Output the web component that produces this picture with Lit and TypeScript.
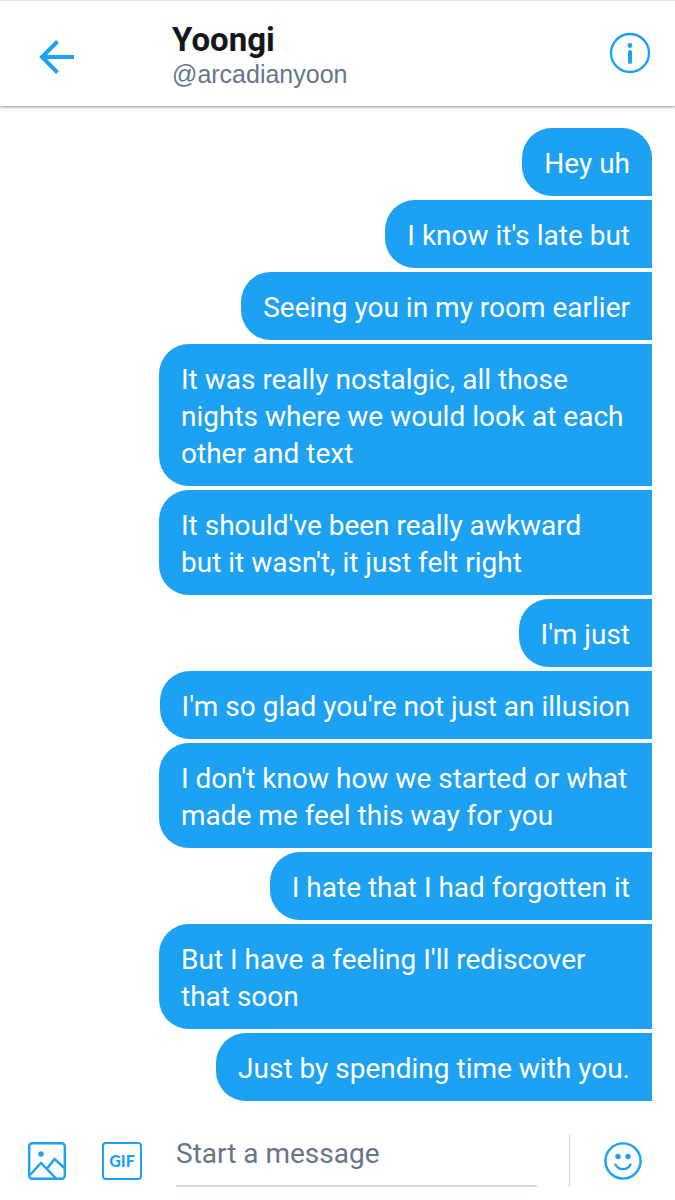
import { LitElement, html, css } from "lit";
import { customElement, property } from "lit/decorators.js";
import { classMap } from "lit/directives/class-map.js";

@customElement("chat-header")
class ChatHeader extends LitElement {
  @property() name = "";
  @property() handle = "";

  static styles = css`
    :host {
      display: block;
    }
    .bar {
      display: flex;
      align-items: center;
      box-sizing: border-box;
      height: 106px;
      padding: 0 24px 0 36px;
      background: #fff;
      border-top: 1px solid #e1e4e6;
      box-shadow: 0 1px 3px rgba(0, 0, 0, 0.45);
    }
    .icon {
      display: block;
      flex: none;
      padding: 0 0 2px;
      border: 0;
      background: none;
      color: #1da1f2;
      cursor: pointer;
    }
    .icon svg {
      display: block;
    }
    .back {
      padding: 6px 0 0;
    }
    .who {
      flex: 1;
      min-width: 0;
      margin-left: 96px;
      padding-top: 4px;
    }
    .name {
      margin: 0;
      font: 700 33px/36px Roboto, sans-serif;
      color: #14171a;
    }
    .handle {
      margin: 0;
      font: 400 25px/32px "Liberation Sans", Arial, sans-serif;
      color: #657786;
    }
  `;

  render() {
    return html`
      <header class="bar">
        <button class="icon back" aria-label="Back">
          <svg width="40" height="40" viewBox="0 0 40 40" fill="none" stroke="currentColor" stroke-width="4">
            <path d="M21.5 4.5 L6 20 L21.5 35.5 M6 20 H38" />
          </svg>
        </button>
        <div class="who">
          <h1 class="name">${this.name}</h1>
          <p class="handle">${this.handle}</p>
        </div>
        <button class="icon" aria-label="Conversation info">
          <svg width="42" height="42" viewBox="0 0 42 42" fill="none" stroke="currentColor">
            <circle cx="21" cy="21" r="19" stroke-width="2.4" />
            <circle cx="21" cy="13.5" r="2.4" fill="currentColor" stroke="none" />
            <path d="M21 20 V30" stroke-width="4" stroke-linecap="round" />
          </svg>
        </button>
      </header>
    `;
  }
}

@customElement("chat-composer")
class ChatComposer extends LitElement {
  static styles = css`
    :host {
      display: block;
    }
    .bar {
      display: flex;
      align-items: center;
      padding: 0 32px 13px 27px;
      background: #fff;
    }
    .icon {
      display: block;
      flex: none;
      padding: 0;
      border: 0;
      background: none;
      color: #1da1f2;
      cursor: pointer;
    }
    .icon svg {
      display: block;
    }
    .gif {
      box-sizing: border-box;
      width: 40px;
      height: 38px;
      margin-left: 35px;
      border: 2px solid #1da1f2;
      border-radius: 4px;
      font: 900 16px/34px Lato, sans-serif;
      text-align: center;
    }
    .field {
      flex: 1;
      min-width: 0;
      box-sizing: border-box;
      height: 53px;
      margin: 0 32px 0 34px;
      padding: 0 0 12px;
      border: 0;
      border-bottom: 2px solid #ccd6dd;
      border-radius: 0;
      outline: none;
      background: none;
      font: 400 28px/36px Roboto, sans-serif;
      color: #14171a;
    }
    .field::placeholder {
      color: #657786;
      opacity: 1;
    }
    .emoji {
      padding-left: 33px;
      height: 53px;
      border-left: 1px solid #ccd6dd;
    }
  `;

  render() {
    return html`
      <form class="bar" @submit=${(e: Event) => e.preventDefault()}>
        <button class="icon" type="button" aria-label="Add photo">
          <svg width="40" height="38" viewBox="0 0 40 38" fill="none" stroke="currentColor" stroke-width="2.4">
            <rect x="2.2" y="1.2" width="35.6" height="35.6" rx="3" />
            <circle cx="14" cy="12" r="2.8" fill="currentColor" stroke="none" />
            <path d="M3 33 L14 21 L29 36.5 M20.5 26 L27.5 17 L37.5 26" />
          </svg>
        </button>
        <button class="icon gif" type="button" aria-label="Add GIF">GIF</button>
        <input class="field" type="text" placeholder="Start a message" aria-label="Start a message" />
        <button class="icon emoji" type="button" aria-label="Add emoji">
          <svg width="40" height="40" viewBox="0 0 40 40" fill="none" stroke="currentColor" stroke-width="2.4">
            <circle cx="20" cy="20" r="17.6" />
            <circle cx="15" cy="15.5" r="2.7" fill="currentColor" stroke="none" />
            <circle cx="25" cy="15.5" r="2.7" fill="currentColor" stroke="none" />
            <path d="M12.5 23.5 C15.5 29.6 24.5 29.6 27.5 23.5" stroke-linecap="round" />
          </svg>
        </button>
      </form>
    `;
  }
}

@customElement("app-root")
class AppRoot extends LitElement {
  private messages = [
    "Hey uh",
    "I know it's late but",
    "Seeing you in my room earlier",
    "It was really nostalgic, all those nights where we would look at each other and text",
    "It should've been really awkward\nbut it wasn't, it just felt right",
    "I'm just",
    "I'm so glad you're not just an illusion",
    "I don't know how we started or what made me feel this way for you",
    "I hate that I had forgotten it",
    "But I have a feeling I'll rediscover that soon",
    "Just by spending time with you.",
  ];

  static styles = css`
    :host {
      display: flex;
      flex-direction: column;
      min-height: 100vh;
      background: #fff;
    }
    .thread {
      flex: 1;
      display: flex;
      flex-direction: column;
      align-items: flex-end;
      gap: 4px;
      margin: 0;
      padding: 22px 23px 22px 159px;
      list-style: none;
    }
    .bubble {
      box-sizing: border-box;
      max-width: 100%;
      padding: 17px 22px 14px;
      border-radius: 30px 0 0 30px;
      background: #1da1f2;
      font: 400 28px/37px Roboto, sans-serif;
      color: #fff;
      white-space: pre-line;
    }
    .bubble:first-child {
      border-top-right-radius: 30px;
    }
    .wide {
      width: 100%;
    }
  `;

  render() {
    return html`
      <chat-header name="Yoongi" handle="@arcadianyoon"></chat-header>
      <ol class="thread">
        ${this.messages.map(
          (m) => html`<li class=${classMap({ bubble: true, wide: m.includes("\n") })}>${m}</li>`
        )}
      </ol>
      <chat-composer></chat-composer>
    `;
  }
}
